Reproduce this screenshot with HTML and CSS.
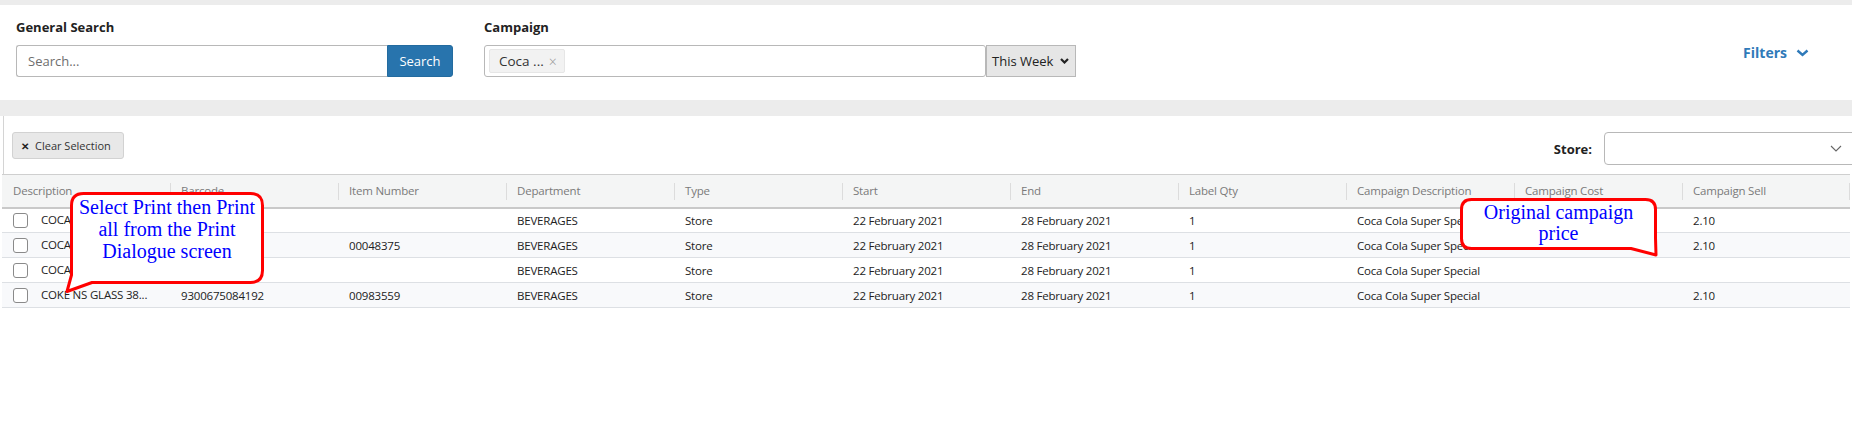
FILE: index.html
```html
<!DOCTYPE html>
<html lang="en">
<head>
    <meta charset="UTF-8">
    <meta name="viewport" content="width=device-width, initial-scale=1.0">
    <title>Campaign Labels</title>
    <link rel="stylesheet" href="styles.css">
</head>
<body>
    <div class="panel filter-panel">
        <div class="field search-field">
            <div class="field-label">General Search</div>
            <div class="input-group">
                <input class="text-input" type="text" placeholder="Search...">
                <button class="search-button">Search</button>
            </div>
        </div>
        <div class="field campaign-field">
            <div class="field-label">Campaign</div>
            <div class="input-group">
                <div class="tag-input">
                    <span class="tag">Coca ... <span class="tag-remove">×</span></span>
                </div>
                <div class="week-select">
                    <span>This Week</span>
                    <svg width="9" height="6" viewBox="0 0 9 6"><path d="M1 1 L4.5 4.5 L8 1" fill="none" stroke="#222" stroke-width="2.2"/></svg>
                </div>
            </div>
        </div>
        <a href="#" class="filters-link">
            Filters
            <svg width="13" height="8" viewBox="0 0 13 8"><path d="M1.5 1.5 L6.5 6 L11.5 1.5" fill="none" stroke="#2f7ab9" stroke-width="2.4"/></svg>
        </a>
    </div>

    <div class="panel grid-panel">
        <div class="toolbar">
            <button class="clear-button"><span class="clear-x">✕</span> Clear Selection</button>
            <div class="store-filter">
                <span class="store-label">Store:</span>
                <div class="store-select">
                    <svg width="12" height="7" viewBox="0 0 12 7"><path d="M1 1 L6 6 L11 1" fill="none" stroke="#666" stroke-width="1.1"/></svg>
                </div>
            </div>
        </div>

        <table class="grid">
            <thead>
                <tr>
                    <th>Description</th>
                    <th>Barcode</th>
                    <th>Item Number</th>
                    <th>Department</th>
                    <th>Type</th>
                    <th>Start</th>
                    <th>End</th>
                    <th>Label Qty</th>
                    <th>Campaign Description</th>
                    <th>Campaign Cost</th>
                    <th>Campaign Sell</th>
                </tr>
            </thead>
            <tbody>
                <tr>
                    <td><span class="check"></span>COCA COLA 1.25L...</td>
                    <td></td>
                    <td></td>
                    <td>BEVERAGES</td>
                    <td>Store</td>
                    <td>22 February 2021</td>
                    <td>28 February 2021</td>
                    <td>1</td>
                    <td>Coca Cola Super Special</td>
                    <td></td>
                    <td>2.10</td>
                </tr>
                <tr>
                    <td><span class="check"></span>COCA COLA 2L PET...</td>
                    <td></td>
                    <td>00048375</td>
                    <td>BEVERAGES</td>
                    <td>Store</td>
                    <td>22 February 2021</td>
                    <td>28 February 2021</td>
                    <td>1</td>
                    <td>Coca Cola Super Special</td>
                    <td></td>
                    <td>2.10</td>
                </tr>
                <tr>
                    <td><span class="check"></span>COCA COLA ZERO...</td>
                    <td></td>
                    <td></td>
                    <td>BEVERAGES</td>
                    <td>Store</td>
                    <td>22 February 2021</td>
                    <td>28 February 2021</td>
                    <td>1</td>
                    <td>Coca Cola Super Special</td>
                    <td></td>
                    <td></td>
                </tr>
                <tr>
                    <td><span class="check"></span>COKE NS GLASS 38...</td>
                    <td>9300675084192</td>
                    <td>00983559</td>
                    <td>BEVERAGES</td>
                    <td>Store</td>
                    <td>22 February 2021</td>
                    <td>28 February 2021</td>
                    <td>1</td>
                    <td>Coca Cola Super Special</td>
                    <td></td>
                    <td>2.10</td>
                </tr>
            </tbody>
        </table>
    </div>

    <!-- annotation callouts drawn over the grid -->
    <div class="callout callout-print">
        <svg class="callout-shape" width="202" height="104" viewBox="0 0 202 104">
            <path d="M19.5 3.5 H186.5 Q198.5 3.5 198.5 15.5 V80.5 Q198.5 92.5 186.5 92.5 H28 L3 101.5 L7.5 85 V15.5 Q7.5 3.5 19.5 3.5 Z" fill="#fff" stroke="#f00" stroke-width="3" stroke-linejoin="round"/>
        </svg>
        <div class="callout-text">Select Print then Print<br>all from the Print<br>Dialogue screen</div>
    </div>

    <div class="callout callout-price">
        <svg class="callout-shape" width="204" height="64" viewBox="0 0 204 64">
            <path d="M14.5 4.5 H188.5 Q198.5 4.5 198.5 14.5 V43 L199 60 L174 53.5 H14.5 Q4.5 53.5 4.5 43.5 V14.5 Q4.5 4.5 14.5 4.5 Z" fill="#fff" stroke="#f00" stroke-width="3" stroke-linejoin="round"/>
        </svg>
        <div class="callout-text">Original campaign<br>price</div>
    </div>
</body>
</html>
```

FILE: styles.css
```css
* {
    margin: 0;
    padding: 0;
    box-sizing: border-box;
}

html, body {
    overflow: hidden;
}

body {
    position: relative;
    height: 421px;
    background-color: #ececec;
    color: #222;
    font-family: "Open Sans", Arial, sans-serif;
    font-size: 12px;
}

.panel {
    background-color: #fff;
}

/* top filter bar */
.filter-panel {
    display: flex;
    align-items: flex-start;
    margin-top: 5px;
    height: 95px;
    padding: 13px 43px 0 16px;
}

.field-label {
    font-size: 13px;
    font-weight: bold;
    line-height: 18px;
    color: #222;
    margin-bottom: 9px;
}

.input-group {
    display: flex;
    height: 32px;
}

.search-field {
    width: 437px;
}

.text-input {
    flex: 1;
    height: 32px;
    border: 1px solid #b8b8b8;
    border-right: none;
    border-radius: 3px 0 0 3px;
    padding-left: 11px;
    font-family: inherit;
    font-size: 13px;
    outline: none;
}

.text-input::placeholder {
    color: #6e6e6e;
}

.search-button {
    width: 66px;
    height: 32px;
    border: 1px solid #236b9f;
    border-radius: 0 3px 3px 0;
    background-color: #2874ad;
    color: #fff;
    font-family: inherit;
    font-size: 13px;
}

.campaign-field {
    width: 592px;
    margin-left: 31px;
}

.tag-input {
    width: 502px;
    height: 32px;
    border: 1px solid #b8b8b8;
    border-radius: 3px;
    padding: 3px 4px;
}

.tag {
    display: inline-flex;
    align-items: center;
    gap: 5px;
    height: 24px;
    padding: 0 7px 0 9px;
    background-color: #f2f2f2;
    border: 1px solid #e6e6e6;
    border-radius: 2px;
    font-size: 13.5px;
    color: #333;
}

.tag-remove {
    color: #999;
    font-size: 14px;
    font-weight: 300;
}

.week-select {
    display: flex;
    align-items: center;
    justify-content: space-between;
    width: 90px;
    height: 32px;
    padding: 0 6px 0 5px;
    background-color: #e6e6e6;
    border: 1px solid #b8b8b8;
    font-size: 13px;
    color: #222;
}

.filters-link {
    display: flex;
    align-items: center;
    gap: 9px;
    margin-left: auto;
    margin-top: 25px;
    color: #2f7ab9;
    font-size: 14px;
    font-weight: bold;
    text-decoration: none;
}

/* grid panel */
.grid-panel {
    margin-top: 16px;
    height: 305px;
    padding-top: 16px;
    overflow: hidden;
}

.toolbar {
    display: flex;
    align-items: flex-start;
    height: 58px;
    margin-top: -16px;
    padding: 16px 0 0 8px;
    margin-left: 3px;
    border-left: 1px solid #d4d4d4;
}

.clear-button {
    display: flex;
    align-items: center;
    gap: 6px;
    height: 27px;
    width: 112px;
    padding-left: 8px;
    background-color: #e8e8e8;
    border: 1px solid #d2d2d2;
    border-radius: 3px;
    font-family: inherit;
    font-size: 11px;
    color: #333;
}

.clear-x {
    font-size: 10px;
    font-weight: bold;
    color: #222;
}

.store-filter {
    display: flex;
    align-items: center;
    gap: 12px;
    margin-left: auto;
    margin-right: -12px;
}

.store-label {
    font-size: 13px;
    font-weight: bold;
}

.store-select {
    display: flex;
    align-items: center;
    justify-content: flex-end;
    width: 260px;
    height: 33px;
    padding-right: 21px;
    border: 1px solid #b8b8b8;
    border-radius: 4px;
}

.grid {
    width: 1848px;
    margin-left: 2px;
    table-layout: fixed;
    border-collapse: collapse;
    font-size: 11.5px;
    letter-spacing: -0.2px;
}

.grid th {
    position: relative;
    height: 33px;
    padding-left: 11px;
    text-align: left;
    font-weight: normal;
    color: #7a7a7a;
    background-color: #f4f5f5;
    border-top: 1px solid #cfcfcf;
    border-bottom: 2px solid #c9c9c9;
    white-space: nowrap;
}

.grid th + th::before,
.grid th:last-child::after {
    content: '';
    position: absolute;
    top: 8px;
    width: 1px;
    height: 17px;
    background-color: #dcdcdc;
}

.grid th + th::before {
    left: 0;
}

.grid th:last-child::after {
    right: 0;
}

.grid td {
    height: 25px;
    padding-left: 11px;
    border-bottom: 1px solid #dde0e4;
    white-space: nowrap;
    overflow: hidden;
}

.grid tbody tr:nth-child(even) td {
    background-color: #f8f9fb;
}

.check {
    display: inline-block;
    width: 15px;
    height: 15px;
    margin-right: 13px;
    vertical-align: -4px;
    background-color: #fff;
    border: 1px solid #8a8a8a;
    border-radius: 3px;
}

/* annotation callouts */
.callout {
    position: absolute;
}

.callout-shape {
    position: absolute;
    top: 0;
    left: 0;
}

.callout-text {
    position: relative;
    text-align: center;
    color: #0000ff;
    font-family: "Liberation Serif", "Times New Roman", serif;
    font-size: 20px;
}

.callout-print {
    left: 64px;
    top: 190px;
    width: 202px;
    height: 104px;
}

.callout-print .callout-text {
    margin-left: 6px;
    width: 194px;
    padding-top: 6px;
    line-height: 22px;
}

.callout-price {
    left: 1457px;
    top: 195px;
    width: 204px;
    height: 64px;
}

.callout-price .callout-text {
    margin-left: 3px;
    width: 197px;
    padding-top: 7px;
    line-height: 21px;
}
```
